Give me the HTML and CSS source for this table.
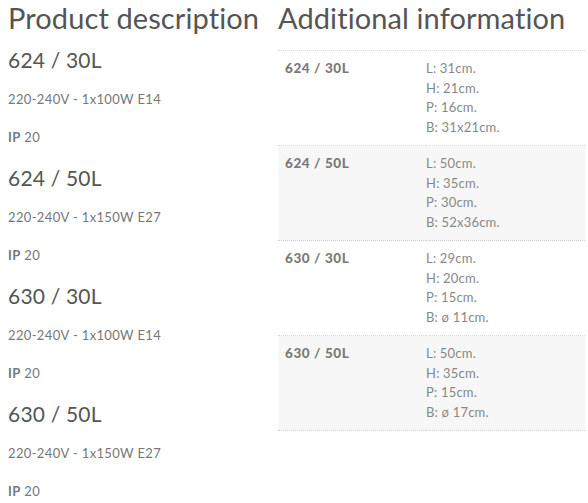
FILE: index.html
```html
<!DOCTYPE html>
<html lang="en">
<head>
<meta charset="utf-8">
<title>Product</title>
<link rel="stylesheet" href="styles.css">
</head>
<body>
<div class="page">
  <section class="desc">
    <h2 class="title">Product description</h2>
    <div class="model">
      <h3 class="model-name">624 / 30L</h3>
      <p class="spec">220-240V - 1x100W E14</p>
      <p class="spec"><strong>IP</strong> 20</p>
    </div>
    <div class="model">
      <h3 class="model-name">624 / 50L</h3>
      <p class="spec">220-240V - 1x150W E27</p>
      <p class="spec"><strong>IP</strong> 20</p>
    </div>
    <div class="model">
      <h3 class="model-name">630 / 30L</h3>
      <p class="spec">220-240V - 1x100W E14</p>
      <p class="spec"><strong>IP</strong> 20</p>
    </div>
    <div class="model">
      <h3 class="model-name">630 / 50L</h3>
      <p class="spec">220-240V - 1x150W E27</p>
      <p class="spec"><strong>IP</strong> 20</p>
    </div>
  </section>
  <section class="info">
    <h2 class="title">Additional information</h2>
    <table class="attrs">
      <tbody>
        <tr>
          <th>624 / 30L</th>
          <td><p>L: 31cm.<br>H: 21cm.<br>P: 16cm.<br>B: 31x21cm.</p></td>
        </tr>
        <tr>
          <th>624 / 50L</th>
          <td><p>L: 50cm.<br>H: 35cm.<br>P: 30cm.<br>B: 52x36cm.</p></td>
        </tr>
        <tr>
          <th>630 / 30L</th>
          <td><p>L: 29cm.<br>H: 20cm.<br>P: 15cm.<br>B: ø 11cm.</p></td>
        </tr>
        <tr>
          <th>630 / 50L</th>
          <td><p>L: 50cm.<br>H: 35cm.<br>P: 15cm.<br>B: ø 17cm.</p></td>
        </tr>
      </tbody>
    </table>
  </section>
</div>
</body>
</html>
```

FILE: styles.css
```css
html, body {
  margin: 0;
  padding: 0;
  background: #fff;
}
body {
  font-family: "Lato", "Open Sans", sans-serif;
  color: #777;
}
.page {
  display: grid;
  grid-template-columns: 262px 307px;
  column-gap: 8px;
  padding-left: 8px;
  align-items: start;
}
.title {
  margin: 0;
  font-size: 29px;
  font-weight: 400;
  letter-spacing: 0.1px;
  color: #555;
  line-height: 36px;
}
.model-name {
  margin: 10px 0 0;
  font-size: 21px;
  font-weight: 400;
  letter-spacing: 0.2px;
  color: #555;
  line-height: 28px;
}
.spec {
  margin: 12px 0 0;
  font-size: 13px;
  letter-spacing: 0.35px;
  line-height: 26px;
}
.spec strong {
  font-weight: 700;
}
.model {
  margin-bottom: 14px;
}
.attrs {
  width: 100%;
  margin-top: 14px;
  border-collapse: collapse;
  border-top: 1px dotted rgba(0,0,0,0.15);
  font-size: 13px;
}
.attrs th {
  width: 133px;
  padding: 8px 8px 8px 7px;
  text-align: left;
  vertical-align: top;
  font-size: 13.5px;
  font-weight: 900;
  letter-spacing: 0.6px;
  color: #7a7a7a;
  line-height: 19.5px;
  border-bottom: 1px dotted rgba(0,0,0,0.15);
}
.attrs td {
  padding: 0;
  letter-spacing: 0.2px;
  color: #888;
  border-bottom: 1px dotted rgba(0,0,0,0.15);
}
.attrs td p {
  margin: 0;
  padding: 8px 0;
  line-height: 19.5px;
}
.attrs tr:nth-child(even) th,
.attrs tr:nth-child(even) td {
  background: #f7f7f7;
}
```
